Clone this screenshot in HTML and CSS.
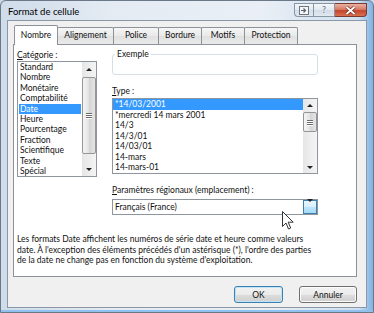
FILE: index.html
```html
<!DOCTYPE html>
<html lang="fr">
<head>
  <meta charset="UTF-8">
  <title>Format de cellule</title>
  <link rel="stylesheet" href="styles.css">
</head>
<body>
  <div class="window">
    <div class="titlebar">
      <span class="title">Format de cellule</span>
      <div class="caption">
        <span class="cbtn cbtn-min">
          <svg width="10" height="9" viewBox="0 0 10 9"><rect x="0.5" y="0.5" width="9" height="8" fill="#f4f6f8" stroke="#6b7580"/><path d="M2 4.5h4M4.5 2.5l2 2-2 2" fill="none" stroke="#5a6470" stroke-width="1.2"/></svg>
        </span>
        <span class="cbtn cbtn-help">?</span>
        <span class="cbtn cbtn-close">
          <svg width="11" height="9" viewBox="0 0 11 9"><path d="M1.5 1l8 7M9.5 1l-8 7" stroke="#6a2a20" stroke-width="3.2"/><path d="M1.5 1l8 7M9.5 1l-8 7" stroke="#fff" stroke-width="1.8"/></svg>
        </span>
      </div>
    </div>

    <div class="client">
      <div class="tabs">
        <span class="tab active">Nombre</span>
        <span class="tab">Alignement</span>
        <span class="tab">Police</span>
        <span class="tab">Bordure</span>
        <span class="tab">Motifs</span>
        <span class="tab">Protection</span>
      </div>

      <div class="panel">
        <div class="cols">
          <div class="col-left">
            <div class="label"><u>C</u>atégorie :</div>
            <div class="listbox cat-list">
              <div class="items">
                <div class="item">Standard</div>
                <div class="item">Nombre</div>
                <div class="item">Monétaire</div>
                <div class="item">Comptabilité</div>
                <div class="item selected">Date</div>
                <div class="item">Heure</div>
                <div class="item">Pourcentage</div>
                <div class="item">Fraction</div>
                <div class="item">Scientifique</div>
                <div class="item">Texte</div>
                <div class="item">Spécial</div>
              </div>
              <div class="vscroll">
                <span class="arrow up"></span>
                <span class="thumb"><i></i><i></i><i></i></span>
                <span class="track"></span>
                <span class="arrow down"></span>
              </div>
            </div>
          </div>

          <div class="col-right">
            <fieldset class="sample">
              <legend>Exemple</legend>
            </fieldset>
            <div class="label label-type"><u>T</u>ype :</div>
            <div class="listbox type-list">
              <div class="items">
                <div class="item selected">*14/03/2001</div>
                <div class="item">*mercredi 14 mars 2001</div>
                <div class="item">14/3</div>
                <div class="item">14/3/01</div>
                <div class="item">14/03/01</div>
                <div class="item">14-mars</div>
                <div class="item">14-mars-01</div>
              </div>
              <div class="vscroll">
                <span class="arrow up"></span>
                <span class="thumb"><i></i><i></i><i></i></span>
                <span class="track"></span>
                <span class="arrow down"></span>
              </div>
            </div>
            <div class="label label-locale"><u>P</u>aramètres régionaux (emplacement) :</div>
            <div class="combo">
              <span class="combo-text">Français (France)</span>
              <span class="combo-btn"><span class="arrow down"></span></span>
            </div>
          </div>
        </div>

        <p class="desc">Les formats Date affichent les numéros de série date et heure comme valeurs<br>date. À l'exception des éléments précédés d'un astérisque (*), l'ordre des parties<br>de la date ne change pas en fonction du système d'exploitation.</p>

        <svg class="cursor" width="12" height="19" viewBox="0 0 12 19">
          <path d="M0.5 0.5v15l3.5-3.5 2.5 6 2.2-1-2.5-5.8h5z" fill="#fff" stroke="#333" stroke-width="1"/>
        </svg>
      </div>

      <div class="buttons">
        <button class="btn btn-default">OK</button>
        <button class="btn btn-cancel">Annuler</button>
      </div>
    </div>
  </div>
</body>
</html>
```

FILE: styles.css
```css
body {
  margin: 0;
  background: #c8d6e6;
  font-family: Lato, "Open Sans", sans-serif;
  font-size: 8.5px;
  color: #111;
}

.window {
  width: 374px;
  height: 313px;
  box-sizing: border-box;
  border: 1px solid #6a7888;
  border-radius: 6px 6px 0 0;
  padding: 0 6px 4px 6px;
  display: flex;
  flex-direction: column;
  background: linear-gradient(to right, #cfdcea 0%, #e4ebf3 30%, #e9eff5 70%, #cfdff0 96%, #7fb2e4 100%);
  box-shadow: inset 0 -2px 0 #8fc0ee;
}

/* title bar */
.titlebar {
  height: 19px;
  display: flex;
  align-items: flex-start;
}
.title {
  padding: 5px 0 0 1px;
  font-size: 9.5px;
  line-height: 12px;
  color: #000;
}
.caption {
  margin-left: auto;
  margin-top: 2px;
  display: flex;
}
.cbtn {
  height: 14px;
  box-sizing: border-box;
  border: 1px solid #8995a3;
  display: flex;
  align-items: center;
  justify-content: center;
  background: linear-gradient(#f4f7fa, #e1e8ef 50%, #d2dce7 51%, #e2e9f1);
}
.cbtn-min {
  width: 19px;
  border-radius: 0 0 0 4px;
  border-right: none;
}
.cbtn-help {
  width: 22px;
  font-size: 9px;
  line-height: 12px;
  color: #6d7884;
}
.cbtn-close {
  width: 32px;
  border-color: #7a3a30;
  border-left: none;
  border-radius: 0 0 4px 0;
  background: linear-gradient(#eab0a2, #d87c66 45%, #c5452f 55%, #d9704f);
}

/* client area */
.client {
  flex: 1;
  border: 1px solid #8b97a6;
  background: #f0f0f0;
  padding: 4px 9px 0 5px;
  display: flex;
  flex-direction: column;
}

.tabs {
  height: 19px;
  display: flex;
  align-items: flex-end;
  padding-left: 1px;
  position: relative;
  z-index: 1;
}
.tab {
  height: 17px;
  box-sizing: border-box;
  border: 1px solid #8d929a;
  border-bottom: none;
  margin-right: -1px;
  text-align: center;
  line-height: 15px;
  background: linear-gradient(#f6f6f6, #e9e9e9 50%, #e0e0e0 51%, #eaeaea);
  border-radius: 2px 2px 0 0;
  white-space: nowrap;
}
.tab:nth-child(1) { width: 44px; }
.tab:nth-child(2) { width: 57px; }
.tab:nth-child(3) { width: 46px; }
.tab:nth-child(4) { width: 44px; }
.tab:nth-child(5) { width: 44px; }
.tab:nth-child(6) { width: 54px; }
.tab.active {
  height: 20px;
  margin-bottom: -1px;
  line-height: 18px;
  background: #fff;
  position: relative;
  z-index: 2;
}

.panel {
  height: 233px;
  box-sizing: border-box;
  border: 1px solid #8d929a;
  background: #fff;
  padding: 0 3px;
  position: relative;
}

.cols {
  display: grid;
  grid-template-columns: 80px 206px;
  column-gap: 15px;
  align-items: start;
}

.label {
  line-height: 12px;
  white-space: nowrap;
}
.col-left .label {
  margin-top: 4px;
}
.label-type {
  margin-top: 10px;
}
.label-locale {
  margin-top: 10px;
}

/* list boxes */
.listbox {
  box-sizing: border-box;
  border: 1px solid #8e959e;
  display: flex;
  background: #fff;
}
.cat-list {
  height: 116px;
}
.type-list {
  height: 76px;
  margin-top: 1px;
}
.items {
  flex: 1;
  padding: 0 1px;
}
.cat-list .item {
  line-height: 10.4px;
  height: 10.4px;
  padding-left: 1px;
}
.type-list .items {
  padding: 0;
}
.type-list .item {
  line-height: 10.5px;
  height: 10.5px;
  padding-left: 2px;
}
.item.selected {
  background: #3399ff;
  color: #fff;
}

.vscroll {
  width: 14px;
  display: flex;
  flex-direction: column;
  background: linear-gradient(to right, #e6e6e6, #f4f4f4);
}
.vscroll .arrow {
  height: 14px;
  display: flex;
  align-items: center;
  justify-content: center;
}
.type-list .vscroll .arrow {
  height: 12px;
}
.arrow::before {
  content: "";
  border-left: 3px solid transparent;
  border-right: 3px solid transparent;
}
.arrow.up::before {
  border-bottom: 3px solid #222;
}
.arrow.down::before {
  border-top: 3px solid #222;
}
.thumb {
  height: 77px;
  margin: 1px 0 0;
  box-sizing: border-box;
  border: 1px solid #959595;
  border-radius: 2px;
  background: linear-gradient(to right, #f5f5f5, #e2e2e2 50%, #d4d4d4 51%, #e4e4e4);
  display: flex;
  flex-direction: column;
  align-items: center;
  justify-content: center;
  gap: 1px;
}
.type-list .thumb {
  height: 20px;
}
.thumb i {
  width: 6px;
  height: 1px;
  background: #6a6a6a;
  box-shadow: 0 1px 0 #fff;
}
.track {
  flex: 1;
}

/* sample group */
.sample {
  margin: 4px 0 0;
  padding: 0;
  height: 26px;
  box-sizing: border-box;
  border: 1px solid #d5dfe5;
  border-radius: 3px;
}
.sample legend {
  margin-left: 2px;
  padding: 0 2px;
  line-height: 10px;
}

/* combo */
.combo {
  margin-top: 3px;
  height: 16px;
  box-sizing: border-box;
  border: 1px solid #8e959e;
  display: flex;
  align-items: stretch;
}
.combo-text {
  flex: 1;
  padding-left: 2px;
  line-height: 14px;
}
.combo-btn {
  width: 14px;
  box-sizing: border-box;
  border: 1px solid #3c7fb1;
  background: linear-gradient(#eaf6fd, #d7effc 50%, #bde6fd 51%, #a6d9f4);
  display: flex;
  align-items: center;
  justify-content: center;
}

.desc {
  margin: 19px 0 0;
  line-height: 10.5px;
  white-space: nowrap;
}

.cursor {
  position: absolute;
  left: 268px;
  top: 166px;
}

/* buttons */
.buttons {
  margin-top: 9px;
  display: flex;
  justify-content: flex-end;
  gap: 16px;
}
.btn {
  height: 17px;
  padding: 0;
  font-family: inherit;
  font-size: 8.5px;
  color: #111;
  border: 1px solid #707070;
  border-radius: 3px;
  background: linear-gradient(#f2f2f2, #ebebeb 50%, #dddddd 51%, #cfcfcf);
  box-shadow: inset 0 0 0 1px #fbfbfb;
}
.btn-default {
  width: 49px;
  border-color: #3c7fb1;
  box-shadow: inset 0 0 0 1px #bfe3f7;
}
.btn-cancel {
  width: 58px;
}
```
